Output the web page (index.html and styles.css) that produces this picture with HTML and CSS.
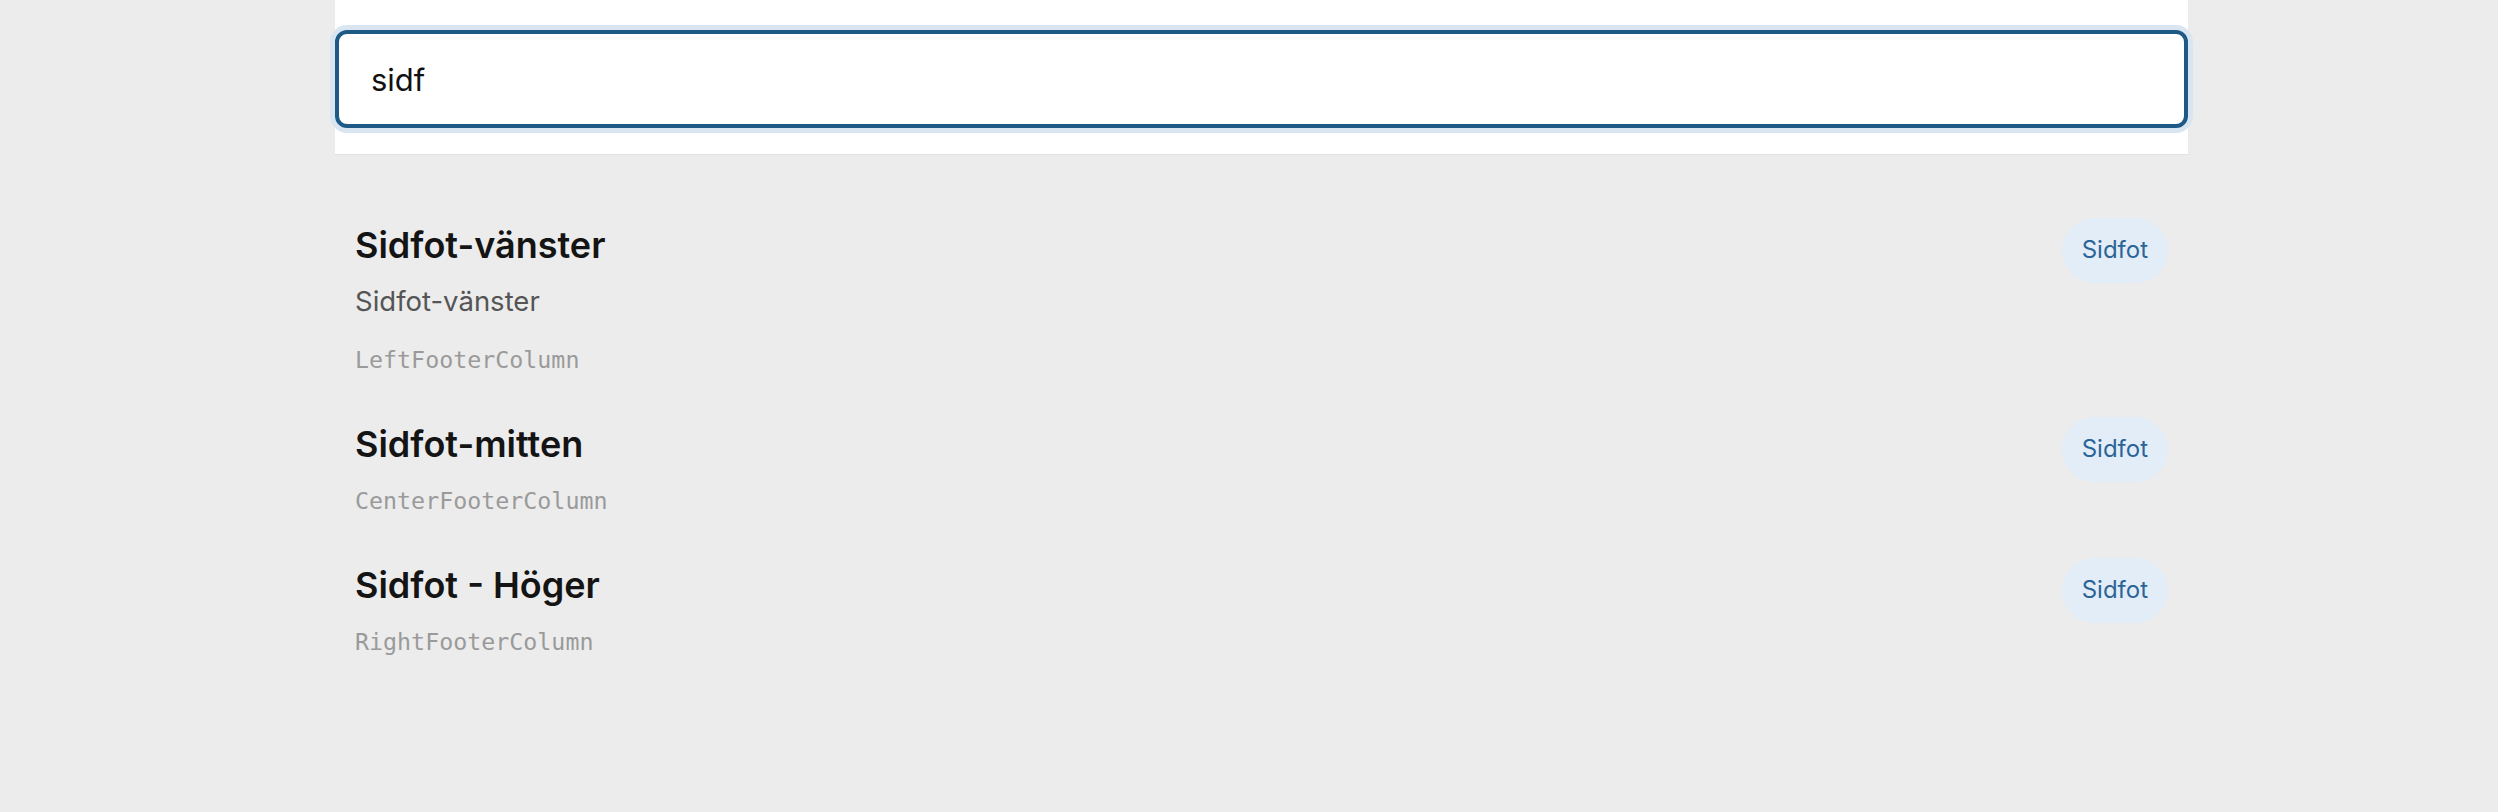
FILE: index.html
```html
<!DOCTYPE html>
<html lang="sv">
<head>
<meta charset="utf-8">
<title>Sök</title>
<link rel="stylesheet" href="styles.css">
</head>
<body>
<div class="wrap">
  <div class="search-panel">
    <div class="search-input">sidf</div>
  </div>
  <ul class="results">
    <li class="result">
      <div class="info">
        <div class="title">Sidfot-vänster</div>
        <div class="subtitle">Sidfot-vänster</div>
        <div class="code">LeftFooterColumn</div>
      </div>
      <span class="badge">Sidfot</span>
    </li>
    <li class="result">
      <div class="info">
        <div class="title">Sidfot-mitten</div>
        <div class="code">CenterFooterColumn</div>
      </div>
      <span class="badge">Sidfot</span>
    </li>
    <li class="result">
      <div class="info">
        <div class="title">Sidfot - Höger</div>
        <div class="code">RightFooterColumn</div>
      </div>
      <span class="badge">Sidfot</span>
    </li>
  </ul>
</div>
</body>
</html>
```
FILE: styles.css
```css
html, body {
  margin: 0;
  padding: 0;
  background: #ececec;
  font-family: "Inter", "Noto Sans", sans-serif;
  color: #111;
}
.wrap {
  margin-left: 335px;
  width: 1853px;
}
.search-panel {
  background: #fff;
  padding: 30px 0 26px;
  border-bottom: 1px solid #e2e2e2;
}
.search-input {
  box-sizing: border-box;
  height: 98px;
  border: 4px solid #1f5a87;
  border-radius: 12px;
  box-shadow: 0 0 0 5px #d9e6f1;
  background: #fff;
  padding: 0 32px;
  display: flex;
  align-items: center;
  font-size: 31px;
  color: #111;
}
.results {
  list-style: none;
  margin: 0;
  padding: 45px 0 0;
}
.result {
  display: flex;
  justify-content: space-between;
  align-items: flex-start;
  padding: 23px 20px 23px;
}
.info {
  display: flex;
  flex-direction: column;
}
.title {
  font-size: 36px;
  line-height: 44px;
  font-weight: 600;
  color: #141414;
  margin-bottom: 19px;
}
.subtitle {
  font-size: 27.5px;
  line-height: 36px;
  color: #555;
  margin-top: -3px;
  margin-bottom: 25px;
}
.code {
  font-family: "DejaVu Sans Mono", "Liberation Mono", monospace;
  font-size: 23.3px;
  line-height: 32px;
  color: #9a9a9a;
}
.badge {
  margin-top: -5px;
  background: #e2edf7;
  color: #2b6598;
  font-size: 24px;
  line-height: 36px;
  padding: 14px 20px 15px;
  border-radius: 33px;
}
```
